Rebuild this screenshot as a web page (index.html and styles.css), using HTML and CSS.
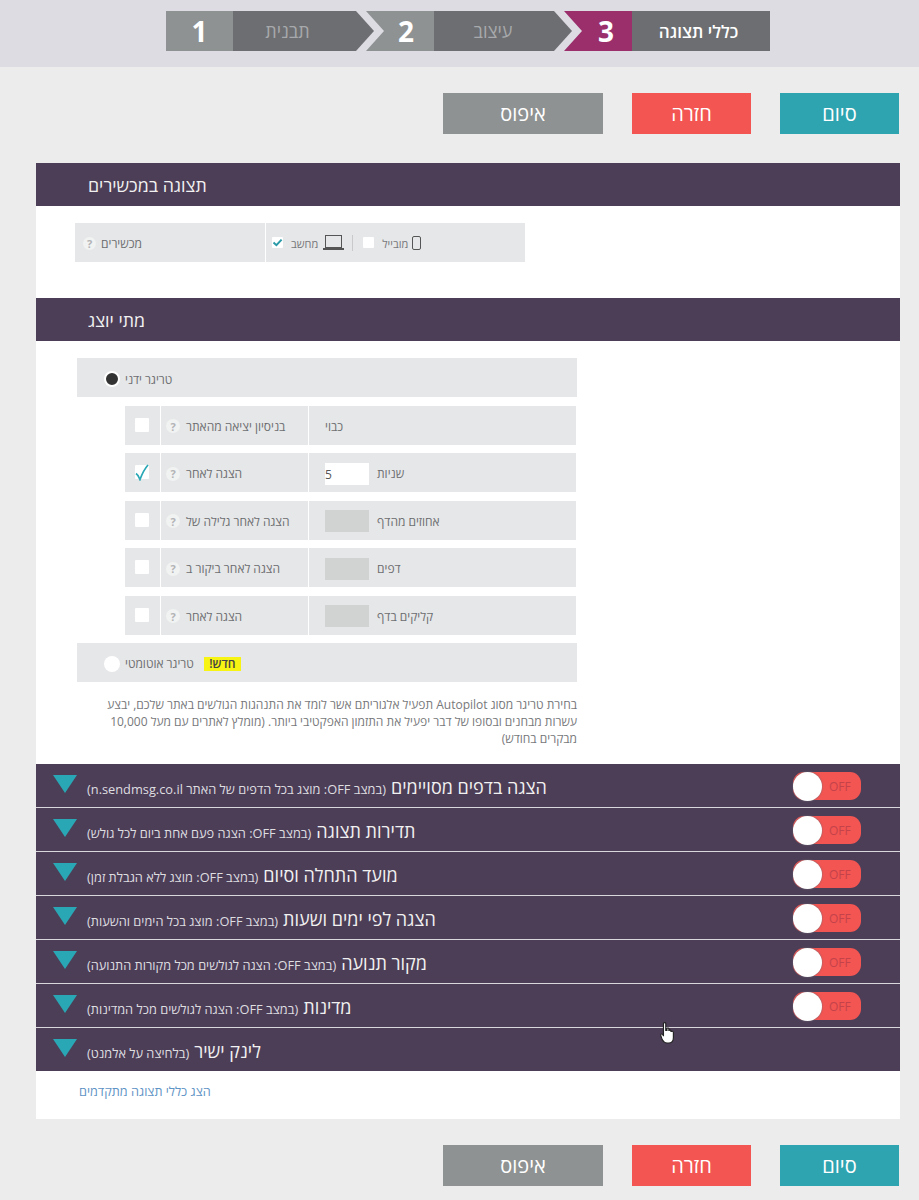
FILE: index.html
```html
<!DOCTYPE html>
<html lang="he">
<head>
<meta charset="utf-8">
<title>כללי תצוגה</title>
<link rel="stylesheet" href="styles.css">
</head>
<body>
<header class="top">
  <nav class="steps">
    <div class="step s1"><span class="num">1</span><span class="lbl" dir="rtl">תבנית</span></div>
    <div class="step s2"><span class="num">2</span><span class="lbl" dir="rtl">עיצוב</span></div>
    <div class="step s3"><span class="num">3</span><span class="lbl" dir="rtl">כללי תצוגה</span></div>
  </nav>
</header>
<div class="actions">
  <button class="btn gray" dir="rtl">איפוס</button>
  <button class="btn red" dir="rtl">חזרה</button>
  <button class="btn teal" dir="rtl">סיום</button>
</div>
<main class="panel">
  <h2 class="head" dir="rtl">תצוגה במכשירים</h2>
  <div class="devices">
    <div class="dev-label"><span class="q">?</span><span dir="rtl">מכשירים</span></div>
    <div class="dev-opts">
      <span class="cb small"><svg viewBox="0 0 11 11" width="11" height="11"><path d="M1.5 5.5 L4.4 8.2 L9.6 2.6" fill="none" stroke="#2a9aa8" stroke-width="2"/></svg></span>
      <span class="dev-t" dir="rtl">מחשב</span>
      <svg class="laptop" viewBox="0 0 21 15" width="21" height="15"><rect x="2.5" y="0.5" width="16" height="12" fill="none" stroke="#555" stroke-width="1"/><path d="M0 13 H21 V15 H0 Z" fill="#555"/></svg>
      <span class="sep"></span>
      <span class="cb small"></span>
      <span class="dev-t" dir="rtl">מובייל</span>
      <svg class="phone" viewBox="0 0 9 14" width="9" height="14"><rect x="0.5" y="0.5" width="8" height="13" rx="1.5" fill="none" stroke="#555" stroke-width="1"/></svg>
    </div>
  </div>
  <h2 class="head second" dir="rtl">מתי יוצג</h2>
  <div class="triggers">
    <div class="tr-main"><span class="radio on"></span><span dir="rtl">טריגר ידני</span></div>
    <div class="tr-row">
      <div class="c-check"><span class="cb"></span></div>
      <div class="c-label"><span class="q">?</span><span dir="rtl">בניסיון יציאה מהאתר</span></div>
      <div class="c-val"><span dir="rtl">כבוי</span></div>
    </div>
    <div class="tr-row">
      <div class="c-check"><span class="cb"><svg class="tick" viewBox="0 0 14 17" width="14" height="17"><path d="M1 9.5 C2.5 10.5 4 12.5 5 15.5 C7 10 9.5 5 13 1" fill="none" stroke="#2aa7b5" stroke-width="1.7"/></svg></span></div>
      <div class="c-label"><span class="q">?</span><span dir="rtl">הצגה לאחר</span></div>
      <div class="c-val"><span class="inp">5</span><span dir="rtl">שניות</span></div>
    </div>
    <div class="tr-row">
      <div class="c-check"><span class="cb"></span></div>
      <div class="c-label"><span class="q">?</span><span dir="rtl">הצגה לאחר גלילה של</span></div>
      <div class="c-val"><span class="inp off"></span><span dir="rtl">אחוזים מהדף</span></div>
    </div>
    <div class="tr-row">
      <div class="c-check"><span class="cb"></span></div>
      <div class="c-label"><span class="q">?</span><span dir="rtl">הצגה לאחר ביקור ב</span></div>
      <div class="c-val"><span class="inp off"></span><span dir="rtl">דפים</span></div>
    </div>
    <div class="tr-row">
      <div class="c-check"><span class="cb"></span></div>
      <div class="c-label"><span class="q">?</span><span dir="rtl">הצגה לאחר</span></div>
      <div class="c-val"><span class="inp off"></span><span dir="rtl">קליקים בדף</span></div>
    </div>
    <div class="tr-main auto"><span class="radio"></span><span dir="rtl">טריגר אוטומטי</span><span class="new" dir="rtl">חדש!</span></div>
    <p class="note" dir="rtl">בחירת טריגר מסוג Autopilot תפעיל אלגוריתם אשר לומד את התנהגות הגולשים באתר שלכם, יבצע עשרות מבחנים ובסופו של דבר יפעיל את התזמון האפקטיבי ביותר. (מומלץ לאתרים עם מעל 10,000 מבקרים בחודש)</p>
  </div>
  <section class="acc">
    <div class="acc-row"><span class="tri"></span><div class="acc-t" dir="rtl"><b>הצגה בדפים מסויימים</b> <small>(במצב OFF: מוצג בכל הדפים של האתר n.sendmsg.co.il)</small></div><span class="toggle"><i></i><em>OFF</em></span></div>
    <div class="acc-row"><span class="tri"></span><div class="acc-t" dir="rtl"><b>תדירות תצוגה</b> <small>(במצב OFF: הצגה פעם אחת ביום לכל גולש)</small></div><span class="toggle"><i></i><em>OFF</em></span></div>
    <div class="acc-row"><span class="tri"></span><div class="acc-t" dir="rtl"><b>מועד התחלה וסיום</b> <small>(במצב OFF: מוצג ללא הגבלת זמן)</small></div><span class="toggle"><i></i><em>OFF</em></span></div>
    <div class="acc-row"><span class="tri"></span><div class="acc-t" dir="rtl"><b>הצגה לפי ימים ושעות</b> <small>(במצב OFF: מוצג בכל הימים והשעות)</small></div><span class="toggle"><i></i><em>OFF</em></span></div>
    <div class="acc-row"><span class="tri"></span><div class="acc-t" dir="rtl"><b>מקור תנועה</b> <small>(במצב OFF: הצגה לגולשים מכל מקורות התנועה)</small></div><span class="toggle"><i></i><em>OFF</em></span></div>
    <div class="acc-row"><span class="tri"></span><div class="acc-t" dir="rtl"><b>מדינות</b> <small>(במצב OFF: הצגה לגולשים מכל המדינות)</small></div><span class="toggle"><i></i><em>OFF</em></span></div>
    <div class="acc-row"><span class="tri"></span><div class="acc-t" dir="rtl"><b>לינק ישיר</b> <small>(בלחיצה על אלמנט)</small></div></div>
  </section>
  <div class="more"><a href="#" dir="rtl">הצג כללי תצוגה מתקדמים</a></div>
</main>
<div class="actions bottom">
  <button class="btn gray" dir="rtl">איפוס</button>
  <button class="btn red" dir="rtl">חזרה</button>
  <button class="btn teal" dir="rtl">סיום</button>
</div>
<svg class="cursor" viewBox="0 0 13 21" width="15" height="22" preserveAspectRatio="none"><path d="M3 1.5 C3 .3 5 .3 5 1.5 V8 L6 8 V6.5 C6 5.5 7.6 5.5 7.7 6.5 V8.5 C7.8 7.3 9.4 7.3 9.5 8.5 V9.5 C9.7 8.5 11.5 8.5 11.6 9.8 V15 C11.6 18 10 20 7.5 20 H6 C4 20 3 19 2 17 L.7 13 C.3 11.5 1.7 11 2.4 12 L3 13.5 Z" fill="#fff" stroke="#222" stroke-width="1"/></svg>
</body>
</html>
```
FILE: styles.css
```css
* { box-sizing: border-box; }
html, body { margin: 0; padding: 0; }
body {
  position: relative;
  width: 919px;
  height: 1200px;
  overflow: hidden;
  background: #ececec;
  font-family: "Open Sans", "Liberation Sans", sans-serif;
  color: #6d6e71;
  font-size: 12px;
}
.top { height: 67px; background: #dcdce2; padding: 11px 0 0 166px; }
.steps { display: flex; height: 40px; }
.step { display: flex; height: 40px; color: #fff; }
.step + .step { margin-left: -8px; }
.num { display: flex; align-items: center; justify-content: center; font-size: 28px; font-weight: 700; background: #8f9292; color: #fff; }
.lbl { display: flex; align-items: center; justify-content: center; background: #6d6e71; font-size: 18px; color: #a7a9ac; font-weight: 500; }
.s1 .num { width: 67px; }
.s1 .lbl { width: 141px; padding-right: 32px; clip-path: polygon(0 0, 123px 0, 141px 20px, 123px 40px, 0 40px); }
.s2 .num { width: 68px; padding-left: 12px; clip-path: polygon(0 0, 100% 0, 100% 100%, 0 100%, 18px 20px); }
.s2 .lbl { width: 138px; padding-right: 20px; clip-path: polygon(0 0, 120px 0, 138px 20px, 120px 40px, 0 40px); }
.s3 .num { width: 68px; padding-left: 16px; background: #9b2f6b; clip-path: polygon(0 0, 100% 0, 100% 100%, 0 100%, 18px 20px); }
.s3 .lbl { width: 138px; padding-right: 5px; color: #fff; font-size: 17px; font-weight: 600; }
.actions { display: flex; justify-content: flex-end; gap: 29px; margin-top: 26px; padding-right: 20px; }
.btn { height: 41px; border: 0; padding: 0; font-family: inherit; font-size: 20px; font-weight: 500; color: #fff; }
.btn.gray { width: 160px; background: #8f9292; }
.btn.red { width: 119px; background: #f35552; }
.btn.teal { width: 119px; background: #2fa4b1; }
.panel { width: 864px; margin: 29px 0 0 36px; background: #fff; height: 956px; }
.head { height: 43px; margin: 0; padding: 0 0 0 52px; background: #4d3e57; color: #f1f1f1; font-size: 17.8px; font-weight: 500; line-height: 45px; text-align: left; }
.head.second { margin-top: 36px; }
.devices { display: flex; width: 450px; height: 39px; margin: 17px 0 0 39px; background: #e6e7e8; }
.dev-label { display: flex; align-items: center; gap: 5px; width: 191px; padding: 2px 0 0 8px; border-right: 1px solid #fff; }
.dev-opts { display: flex; align-items: center; padding-left: 6px; }
.dev-t { font-size: 11px; margin: 1px 0 0 8px; color: #77787b; }
.laptop { margin-left: 5px; }
.sep { width: 1px; height: 16px; background: #c9c9cb; margin: 0 10px 0 8px; }
.phone { margin-left: 4px; }
.q { display: inline-flex; align-items: center; justify-content: center; width: 14px; height: 14px; border-radius: 50%; background: #f1f2f2; color: #b3b4b6; font-size: 11px; font-weight: 700; flex: none; }
.dev-label .q { width: 13px; height: 13px; }
.cb { position: relative; display: inline-flex; width: 14px; height: 14px; margin-bottom: 1px; background: #fff; border-radius: 1px; flex: none; }
.cb.small { width: 11px; height: 11px; margin-bottom: 0; }
.tick { position: absolute; left: 0; top: -1px; }
.triggers { padding: 17px 0 0 41px; height: 423px; }
.tr-main { display: flex; align-items: center; gap: 5px; width: 500px; height: 39px; padding: 3px 0 0 27px; background: #e6e7e8; font-size: 12px; }
.tr-main.auto { margin-top: 8.1px; }
.radio { width: 16px; height: 16px; border-radius: 50%; background: #fff; flex: none; }
.radio.on { background: #333; border: 2px solid #fff; }
.new { margin-left: 5px; padding: 0 1px; background: #f7f313; color: #444; font-weight: 600; font-size: 12px; width: 37px; height: 14px; line-height: 14px; text-align: center; }
.tr-row { display: flex; width: 451px; height: 39px; margin: 8.5px 0 0 48px; background: #e6e7e8; }
.tr-main + .tr-row { margin-top: 8.9px; }
.c-check { display: flex; align-items: center; width: 36px; padding-left: 10px; border-right: 1px solid #fff; }
.c-label { display: flex; align-items: center; gap: 6px; width: 148px; padding: 2px 0 0 5px; border-right: 1px solid #fff; }
.c-val { display: flex; align-items: center; gap: 8px; padding: 2px 0 0 16px; }
.inp { width: 44px; height: 22px; background: #fff; color: #555; font-size: 12px; line-height: 24px; }
.inp.off { background: #d1d3d2; }
.note { width: 470px; margin: 14px 0 0 30px; padding: 0; font-size: 12px; line-height: 17px; color: #77787b; text-align: right; }
.acc-row { display: flex; align-items: center; height: 44px; padding: 0 39px 0 17px; background: #4d3e57; border-bottom: 1px solid #d9d6dc; }
.acc-row:last-child { height: 43px; border-bottom: 0; }
.tri { width: 0; height: 0; margin: -3px 10px 0 0; border-left: 12.5px solid transparent; border-right: 12.5px solid transparent; border-top: 18px solid #2aa7b5; flex: none; }
.acc-t { flex: 1; padding-top: 3px; color: #f1f1f1; display: flex; justify-content: flex-end; align-items: baseline; gap: 5px; white-space: nowrap; }
.acc-t b { font-size: 18px; font-weight: 400; }
.acc-t small { font-size: 12.8px; color: #dedde0; }
.toggle { display: flex; align-items: center; width: 68px; height: 28px; margin-top: 1px; background: #f35552; border-radius: 11px; flex: none; }
.toggle i { width: 29px; height: 29px; border-radius: 50%; background: #fff; box-shadow: 0 0 2px 0 #6f6a75; flex: none; }
.toggle em { margin-left: 7px; font-style: normal; font-size: 12px; color: #c4434a; }
.more { padding: 11px 0 0 43px; }
.more a { color: #5f94c6; font-size: 12.7px; text-decoration: none; }
.bottom { margin-top: 26px; }
.cursor { position: absolute; left: 660px; top: 1022px; }
```
